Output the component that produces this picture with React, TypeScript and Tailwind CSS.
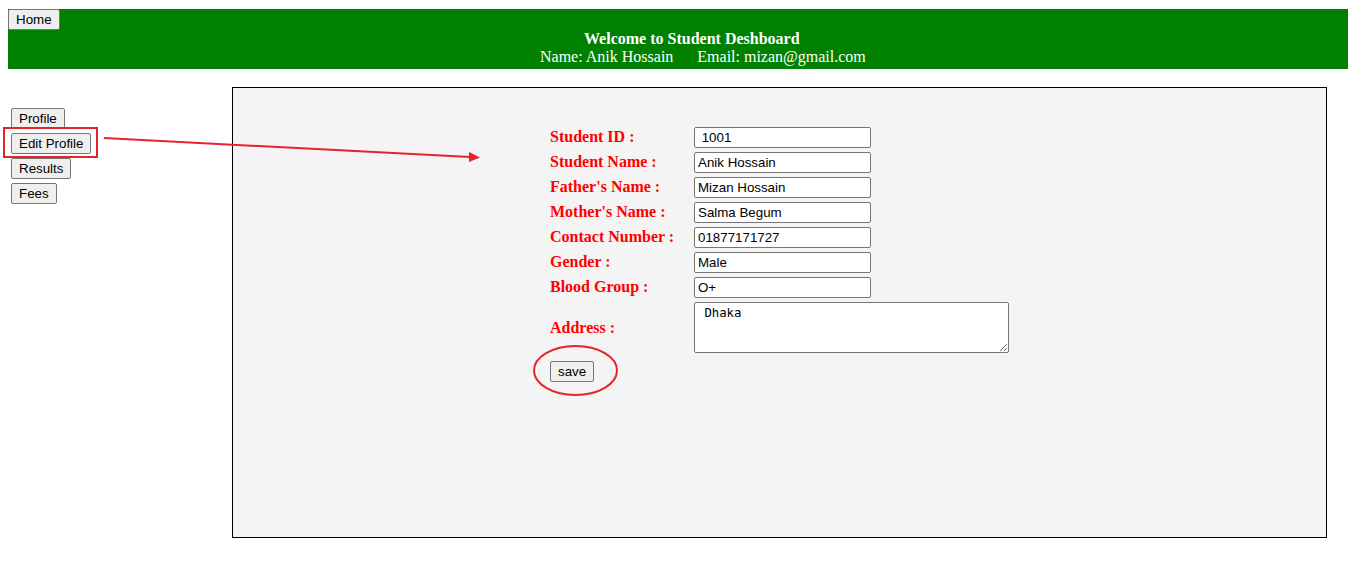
import React from "react";

const btnClass =
  "block h-[21px] rounded-[2px] border border-[#767676] bg-[#efefef] px-[7px] text-[13.33px] leading-[19px] text-black font-['Liberation_Sans',Arial,sans-serif]";

const fields = [
  { label: "Student ID :", value: " 1001" },
  { label: "Student Name :", value: "Anik Hossain" },
  { label: "Father's Name :", value: "Mizan Hossain" },
  { label: "Mother's Name :", value: "Salma Begum" },
  { label: "Contact Number :", value: "01877171727" },
  { label: "Gender :", value: "Male" },
  { label: "Blood Group :", value: "O+" },
];

const labelClass =
  "text-[16px] font-bold text-[#ff0000] font-['Liberation_Serif','Times_New_Roman',serif] leading-[18px]";

export default function App() {
  return (
    <div className="relative min-h-[561px] w-[1348px] bg-white pt-[9px] font-['Liberation_Serif','Times_New_Roman',serif]">
      <header className="ml-[8px] h-[60px] w-[1340px] bg-[#008000] text-white">
        <button type="button" className={btnClass}>
          Home
        </button>
        <div className="pl-[576px] text-[16px] font-bold leading-[18px]">
          Welcome to Student Deshboard
        </div>
        <div className="whitespace-pre pl-[532px] text-[16px] leading-[18px]">
          {"Name: Anik Hossain      Email: mizan@gmail.com"}
        </div>
      </header>

      <div className="ml-[8px] mt-[18px] flex">
        <aside className="flex w-[224px] flex-col items-start gap-[4px] pl-[3px] pt-[21px]">
          <button type="button" className={btnClass}>
            Profile
          </button>
          <button type="button" className={btnClass}>
            Edit Profile
          </button>
          <button type="button" className={btnClass}>
            Results
          </button>
          <button type="button" className={btnClass}>
            Fees
          </button>
        </aside>

        <main className="h-[451px] w-[1095px] border border-black bg-[#f4f4f4] pl-[317px] pt-[39px]">
          <div className="grid grid-cols-[144px_auto] items-center gap-y-[4px]">
            {fields.map((f) => (
              <React.Fragment key={f.label}>
                <span className={`${labelClass} -mt-[1px]`}>{f.label}</span>
                <input
                  readOnly
                  value={f.value}
                  className="h-[21px] w-[177px] rounded-[2px] border border-[#767676] bg-white pl-[3px] pr-[2px] text-[13.33px] text-black font-['Liberation_Sans',Arial,sans-serif] whitespace-pre"
                />
              </React.Fragment>
            ))}
            <span className={labelClass}>Address :</span>
            <textarea
              readOnly
              value=" Dhaka"
              className="h-[51px] w-[315px] rounded-[2px] border border-[#767676] bg-white p-[2px] text-[12.3px] leading-[16px] text-black font-['DejaVu_Sans_Mono',monospace]"
            />
          </div>
          <button type="button" className={`${btnClass} mt-[8px]`}>
            save
          </button>
        </main>
      </div>

      <svg
        className="pointer-events-none absolute left-0 top-0"
        width="1348"
        height="561"
        viewBox="0 0 1348 561"
      >
        <rect x="4" y="128" width="93" height="29" fill="none" stroke="#e3242b" strokeWidth="2" />
        <line x1="104" y1="138" x2="470" y2="157" stroke="#e3242b" strokeWidth="2" />
        <polygon points="480,157.6 469,152 469,162" fill="#e3242b" />
        <ellipse cx="575.5" cy="370.5" rx="41.5" ry="24.5" fill="none" stroke="#e3242b" strokeWidth="2" />
      </svg>
    </div>
  );
}
